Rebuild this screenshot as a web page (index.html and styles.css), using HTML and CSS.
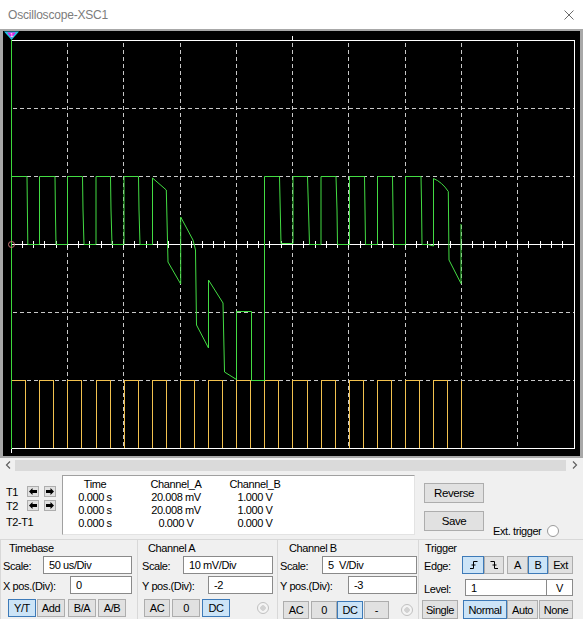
FILE: index.html
```html
<!DOCTYPE html>
<html lang="en">
  <head>
    <meta charset="UTF-8" />
    <meta name="viewport" content="width=device-width, initial-scale=1.0" />
    <title>Oscilloscope-XSC1</title>
    <link rel="stylesheet" href="styles.css">
  </head>
  <body>
    <div class="titlebar">
      <span class="title">Oscilloscope-XSC1</span>
      <svg class="close" width="10" height="10" viewBox="0 0 10 10">
        <path d="M0.5 0.5L9.5 9.5M9.5 0.5L0.5 9.5" stroke="#6b6b6b" stroke-width="1" />
      </svg>
    </div>

    <svg class="screen" width="583" height="429" viewBox="0 29 583 429">
      <rect x="0" y="29" width="583" height="429" fill="#a8a8a8" />
      <rect x="3" y="31" width="577" height="425" fill="#000" />
      <!-- grid -->
      <g stroke="#c8c8c8" stroke-dasharray="4 3" shape-rendering="crispEdges" fill="none">
        <path d="M67.5 43V448M123.5 43V448M180.5 43V448M236.5 43V448M292.5 43V448M348.5 43V448M405.5 43V448M461.5 43V448M517.5 43V448" />
        <path d="M13 108.5H574M13 176.5H574M13 312.5H574M13 380.5H574" />
      </g>
      <!-- center axis -->
      <g stroke="#fff" shape-rendering="crispEdges" fill="none">
        <path d="M11 244.5H575" />
        <path d="M22.5 241v7M33.5 241v7M44.5 241v7M56.5 241v7M67.5 241v7M78.5 241v7M89.5 241v7M101.5 241v7M112.5 241v7M123.5 241v7M134.5 241v7M146.5 241v7M157.5 241v7M168.5 241v7M180.5 241v7M191.5 241v7M202.5 241v7M213.5 241v7M224.5 241v7M236.5 241v7M247.5 241v7M258.5 241v7M269.5 241v7M281.5 241v7M292.5 241v7M303.5 241v7M315.5 241v7M326.5 241v7M337.5 241v7M348.5 241v7M360.5 241v7M371.5 241v7M382.5 241v7M393.5 241v7M405.5 241v7M416.5 241v7M427.5 241v7M438.5 241v7M450.5 241v7M461.5 241v7M472.5 241v7M483.5 241v7M495.5 241v7M506.5 241v7M517.5 241v7M528.5 241v7M540.5 241v7M551.5 241v7M562.5 241v7" />
      </g>
      <!-- channel B -->
      <path fill="none" stroke="#f2c14e" shape-rendering="crispEdges"
        d="M11.5 448V380.5H25.5V448H39.5V380.5H53.5V448H67.5V380.5H81.5V448H96.5V380.5H110.5V448H124.5V380.5H138.5V448H152.5V380.5H166.5V448H180.5V380.5H194.5V448H208.5V380.5H222.5V448H236.5V380.5H250.5V448H264.5V380.5H278.5V448H292.5V380.5H307.5V448H321.5V380.5H335.5V448H349.5V380.5H363.5V448H377.5V380.5H391.5V448H405.5V380.5H419.5V448H433.5V380.5H447.5V448H461.5V380.5" />
      <!-- channel A -->
      <path fill="none" stroke="#43dc43"
        d="M11.5 176.5H27L27.3 202L27.8 244.5H39.5V176.5H55L55.4 210L56 244.5H67.5V176.5H82.5L83 210L84 244.5H96V218V176.5H110.5L111 210L112 244.5H124V176.5H138.5L139 210L140 244.5H152.5V178L166.3 190L168 262L180.7 284V217L193 240L195.5 250L196.5 325L208.5 348V280L223 303L224.5 372L236.5 379.5V311.5H251.5V380.5H264.5V176.5H279.5L281 243.5H293V230V176.5H307.5L308.5 210L309.5 244.5H321V176.5H336L337 210L337.5 244.5H349.5V176.5H364.5L365 210L365.5 244.5H377.5V176.5H392.5L393 210L393.5 244.5H405.5V176.5H421L421.5 203L422 244.5H428L433.5 246V178.5Q442 182 448.3 191.5L449 260L461 283.5V224" />
      <!-- frame -->
      <g stroke="#fff" fill="none" shape-rendering="crispEdges">
        <rect x="11.5" y="40.5" width="563" height="408" />
        <path d="M292.5 36V40M11.5 449V453" />
      </g>
      <!-- cursor -->
      <path d="M11.5 40V449" stroke="#3cd83c" shape-rendering="crispEdges" />
      <circle cx="11.5" cy="244.5" r="3" fill="none" stroke="#c87878" />
      <polygon points="4,31.5 19,31.5 11.5,40" fill="#1ec8e6" />
      <polygon points="7,32.5 16,32.5 11.5,38" fill="#e020e0" />
      <text x="11.5" y="37" font-size="6" font-family="Liberation Sans, sans-serif" fill="#fff" text-anchor="middle">1</text>
    </svg>

    <div class="hscroll">
      <span class="scroll-arrow">
        <svg width="6" height="8" viewBox="0 0 6 8"><polyline points="5,0.5 1.5,4 5,7.5" fill="none" stroke="#606060" stroke-width="1.2" /></svg>
      </span>
      <div class="scroll-thumb"></div>
      <span class="scroll-arrow right">
        <svg width="6" height="8" viewBox="0 0 6 8"><polyline points="1,0.5 4.5,4 1,7.5" fill="none" stroke="#606060" stroke-width="1.2" /></svg>
      </span>
    </div>

    <div class="readout-row">
      <div class="cursors">
        <div class="cursor-row">
          <span class="cursor-label">T1</span>
          <span class="arrow-btn"><svg width="8" height="7" viewBox="0 0 8 7"><polygon points="0,3.5 3.5,0 3.5,2 8,2 8,5 3.5,5 3.5,7" /></svg></span>
          <span class="arrow-btn"><svg width="8" height="7" viewBox="0 0 8 7"><polygon points="8,3.5 4.5,0 4.5,2 0,2 0,5 4.5,5 4.5,7" /></svg></span>
        </div>
        <div class="cursor-row">
          <span class="cursor-label">T2</span>
          <span class="arrow-btn"><svg width="8" height="7" viewBox="0 0 8 7"><polygon points="0,3.5 3.5,0 3.5,2 8,2 8,5 3.5,5 3.5,7" /></svg></span>
          <span class="arrow-btn"><svg width="8" height="7" viewBox="0 0 8 7"><polygon points="8,3.5 4.5,0 4.5,2 0,2 0,5 4.5,5 4.5,7" /></svg></span>
        </div>
        <div class="cursor-row diff">
          <span class="cursor-label">T2-T1</span>
        </div>
      </div>

      <div class="readout">
        <span>Time</span><span>Channel_A</span><span>Channel_B</span>
        <span>0.000 s</span><span>20.008 mV</span><span>1.000 V</span>
        <span>0.000 s</span><span>20.008 mV</span><span>1.000 V</span>
        <span>0.000 s</span><span>0.000 V</span><span>0.000 V</span>
      </div>

      <div class="side">
        <div class="side-buttons">
          <button class="btn push">Reverse</button>
          <button class="btn push">Save</button>
        </div>
        <div class="ext">Ext. trigger <span class="radio"></span></div>
      </div>
    </div>

    <div class="groups">
      <div class="group timebase">
        <div class="group-title">Timebase</div>
        <div class="field scale"><span class="field-label">Scale:</span><input type="text" value="50 us/Div" /></div>
        <div class="field pos"><span class="field-label">X pos.(Div):</span><input type="text" value="0" /></div>
        <div class="buttons">
          <button class="btn on">Y/T</button>
          <button class="btn add">Add</button>
          <button class="btn ba">B/A</button>
          <button class="btn ab">A/B</button>
        </div>
      </div>

      <div class="group chan-a">
        <div class="group-title">Channel A</div>
        <div class="field scale"><span class="field-label">Scale:</span><input type="text" value="10 mV/Div" /></div>
        <div class="field pos"><span class="field-label">Y pos.(Div):</span><input type="text" value="-2" /></div>
        <div class="buttons">
          <button class="btn ac">AC</button>
          <button class="btn zero">0</button>
          <button class="btn dc on">DC</button>
          <span class="radio off"></span>
        </div>
      </div>

      <div class="group chan-b">
        <div class="group-title">Channel B</div>
        <div class="field scale"><span class="field-label">Scale:</span><input type="text" value="5  V/Div" /></div>
        <div class="field pos"><span class="field-label">Y pos.(Div):</span><input type="text" value="-3" /></div>
        <div class="buttons">
          <button class="btn ac">AC</button>
          <button class="btn zero">0</button>
          <button class="btn dc on">DC</button>
          <button class="btn minus">-</button>
          <span class="radio off"></span>
        </div>
      </div>

      <div class="group trigger">
        <div class="group-title">Trigger</div>
        <div class="trig-row">
          <span class="trig-label">Edge:</span>
          <button class="btn on rise"><svg width="9" height="10" viewBox="0 0 9 10"><path d="M1 8.5H4.5V1.5H8.5M2.5 5H6.5" fill="none" stroke="#000" /></svg></button>
          <button class="btn fall"><svg width="9" height="10" viewBox="0 0 9 10"><path d="M0.5 1.5H4.5V8.5H8M2.5 5H6.5" fill="none" stroke="#000" /></svg></button>
          <button class="btn src-a">A</button>
          <button class="btn on src-b">B</button>
          <button class="btn src-ext">Ext</button>
        </div>
        <div class="trig-row level">
          <span class="trig-label wide">Level:</span>
          <input class="level-input" type="text" value="1" />
          <input class="unit-input" type="text" value="V" />
        </div>
        <div class="buttons">
          <button class="btn single">Single</button>
          <button class="btn on normal">Normal</button>
          <button class="btn auto">Auto</button>
          <button class="btn none">None</button>
        </div>
      </div>
    </div>
  </body>
</html>
```

FILE: styles.css
```css
* {
  box-sizing: border-box;
}
body {
  margin: 0;
  width: 583px;
  height: 619px;
  overflow: hidden;
  background-color: #f0f0f0;
  font-family: "Liberation Sans", Arial, sans-serif;
  font-size: 11px;
  letter-spacing: -0.4px;
  color: #000;
}
.titlebar {
  height: 29px;
  background-color: #fff;
  display: flex;
  align-items: center;
  justify-content: space-between;
  padding: 0 9px 0 8px;
}
.title {
  font-size: 12px;
  letter-spacing: -0.2px;
  color: #7c7c7c;
}
.screen {
  display: block;
}
.hscroll {
  height: 14px;
  display: flex;
  align-items: center;
}
.scroll-arrow {
  width: 15px;
  height: 11px;
  display: flex;
  align-items: center;
  justify-content: center;
}
.scroll-arrow.right {
  width: 17px;
}
.scroll-thumb {
  flex: 1;
  height: 11px;
  background-color: #dadada;
}
.readout-row {
  height: 67px;
  display: flex;
}
.cursors {
  width: 62px;
  flex-shrink: 0;
  padding: 13px 0 0 6px;
}
.cursor-row {
  display: flex;
  align-items: center;
  height: 13px;
  margin-bottom: 1px;
}
.cursor-row.diff {
  margin-top: 3px;
}
.cursor-label {
  width: 21px;
  flex-shrink: 0;
  white-space: nowrap;
}
.arrow-btn {
  width: 12px;
  height: 11px;
  background-color: #e1e1e1;
  border: 1px solid #adadad;
  display: flex;
  align-items: center;
  justify-content: center;
}
.arrow-btn + .arrow-btn {
  margin-left: 5px;
}
.readout {
  width: 353px;
  height: 60px;
  margin-top: 3px;
  background-color: #fff;
  border: 1px solid #e3e3e3;
  border-top-color: #a0a0a0;
  border-left-color: #a0a0a0;
  padding-top: 2px;
  display: grid;
  grid-template-columns: 64px 98px 60px;
  grid-auto-rows: 13px;
  align-content: start;
  line-height: 13px;
  text-align: center;
  white-space: nowrap;
}
.side {
  display: flex;
  margin-left: 9px;
}
.side-buttons {
  display: flex;
  flex-direction: column;
  gap: 8px;
  padding-top: 11px;
}
.btn {
  font: inherit;
  letter-spacing: inherit;
  color: #000;
  background-color: #e1e1e1;
  border: 1px solid #adadad;
  border-radius: 0;
  margin: 0;
  padding: 0;
  height: 18px;
  line-height: 16px;
  text-align: center;
  display: flex;
  align-items: center;
  justify-content: center;
}
.btn.on {
  background-color: #cce4f7;
  border-color: #3d7ab8;
}
.btn.push {
  width: 60px;
  height: 20px;
  font-size: 11.5px;
}
.ext {
  align-self: flex-end;
  display: flex;
  align-items: center;
  gap: 6px;
  margin: 0 0 1px 9px;
  height: 14px;
  white-space: nowrap;
}
.radio {
  width: 12px;
  height: 12px;
  border-radius: 50%;
  border: 1px solid #9a9a9a;
  background-color: #fff;
  flex-shrink: 0;
}
.radio.off {
  border-color: #c0c0c0;
  background: radial-gradient(circle, #d2d2d2 0 2.5px, #f4f4f4 3px);
}
.groups {
  display: flex;
  height: 80px;
}
.group {
  border-top: 1px solid #d8d8d8;
  border-left: 1px solid #d8d8d8;
  padding-top: 1px;
  display: flex;
  flex-direction: column;
  white-space: nowrap;
}
.group-title {
  height: 14px;
  line-height: 14px;
}
.field {
  display: flex;
  justify-content: space-between;
  align-items: center;
  height: 18px;
  margin-top: 1px;
}
.field + .field {
  margin-top: 2px;
}
.field-label,
.trig-label {
  padding-top: 2px;
}
.group input {
  font: inherit;
  letter-spacing: inherit;
  color: #000;
  height: 18px;
  border: 1px solid #8a8a8a;
  border-radius: 0;
  background-color: #fff;
  padding: 0 0 0 5px;
  margin: 0;
  outline: none;
}
.buttons {
  display: flex;
  align-items: center;
  margin-top: 5px;
}

/* Timebase */
.timebase {
  width: 137px;
  padding-left: 2px;
  padding-right: 5px;
}
.timebase .group-title {
  margin-left: 6px;
}
.timebase .scale input {
  width: 89px;
}
.timebase .pos input {
  width: 62px;
}
.timebase .buttons {
  margin-left: 5px;
}
.timebase .btn {
  width: 28px;
}
.timebase .add {
  margin-left: 1px;
}
.timebase .ba {
  margin-left: 3px;
}
.timebase .ab {
  margin-left: 2px;
}

/* Channel A */
.chan-a {
  width: 140px;
  padding-left: 4px;
  padding-right: 4px;
}
.chan-a .group-title {
  margin-left: 6px;
}
.chan-a .scale input {
  width: 90px;
}
.chan-a .pos input {
  width: 65px;
}
.chan-a .ac {
  width: 26px;
  margin-left: 2px;
}
.chan-a .zero,
.chan-a .dc {
  width: 28px;
  margin-left: 2px;
}
.chan-a .radio {
  margin-left: 27px;
}

/* Channel B */
.chan-b {
  width: 141px;
  padding-left: 2px;
  padding-right: 1px;
}
.chan-b .group-title {
  margin-left: 9px;
}
.chan-b .scale input {
  width: 95px;
}
.chan-b .pos input {
  width: 69px;
}
.chan-b .buttons {
  margin-top: 7px;
}
.chan-b .ac {
  width: 26px;
  margin-left: 3px;
}
.chan-b .zero {
  width: 26px;
  margin-left: 2px;
}
.chan-b .dc {
  width: 26px;
}
.chan-b .minus {
  width: 25px;
  margin-left: 1px;
}
.chan-b .radio {
  margin-left: 12px;
}

/* Trigger */
.trigger {
  width: 165px;
  padding-left: 5px;
}
.trigger .group-title {
  margin-left: 1px;
}
.trig-row {
  display: flex;
  align-items: center;
  height: 18px;
  margin-top: 1px;
}
.trig-label {
  width: 38px;
}
.trig-label.wide {
  width: 41px;
}
.rise {
  width: 22px;
}
.fall {
  width: 20px;
}
.src-a {
  width: 21px;
  margin-left: 3px;
}
.src-b {
  width: 20px;
}
.src-ext {
  width: 25px;
}
.trig-row.level {
  margin-top: 5px;
  height: 17px;
}
.trigger .level-input {
  width: 82px;
  height: 17px;
}
.trigger .unit-input {
  width: 27px;
  height: 17px;
  margin-left: -1px;
  padding: 0;
  text-align: center;
}
.trigger .buttons {
  margin-top: 4px;
}
.trigger .buttons .btn {
  height: 19px;
}
.single {
  width: 36px;
  margin-left: -2px;
}
.normal {
  width: 44px;
  margin-left: 5px;
}
.auto {
  width: 31px;
}
.none {
  width: 34px;
  margin-left: 1px;
}
```
